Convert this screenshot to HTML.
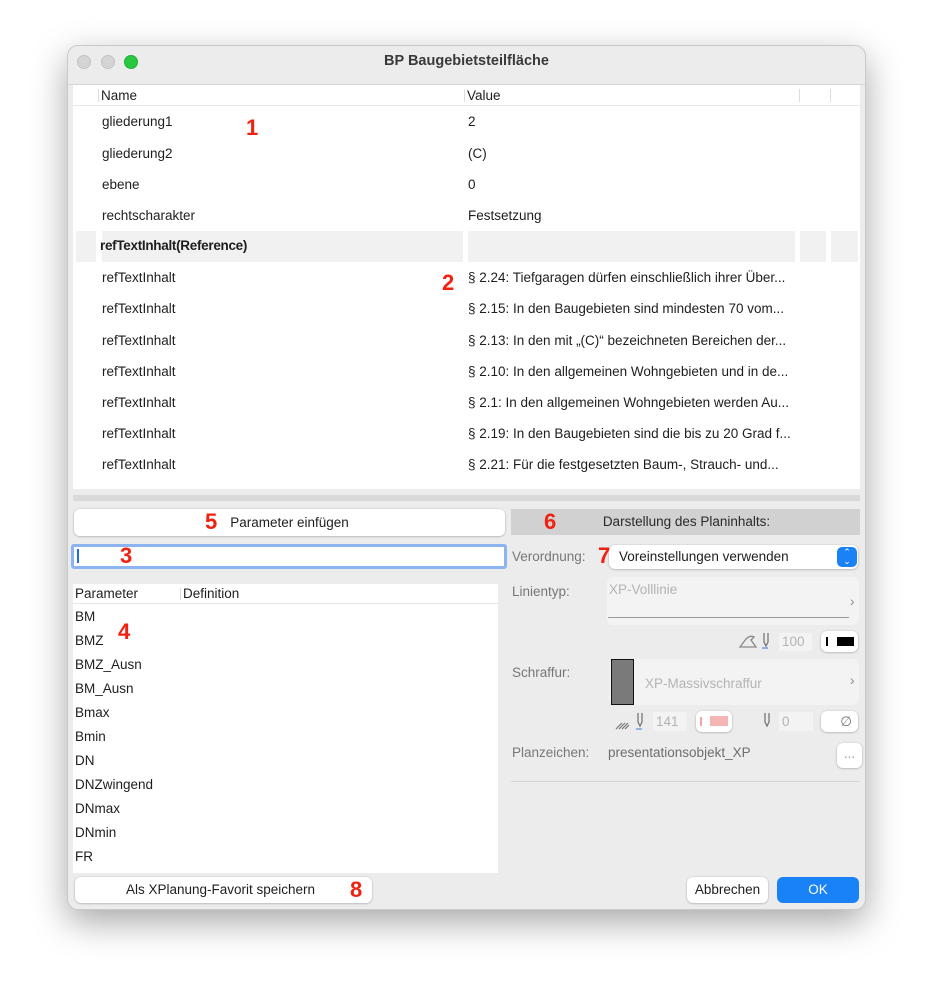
<!DOCTYPE html>
<html><head><meta charset="utf-8"><style>
*{margin:0;padding:0;box-sizing:border-box}
body{width:933px;height:999px;background:#fff;position:relative;font-family:"Liberation Sans",sans-serif;font-size:13.5px;color:#1e1e1e;overflow:hidden}
.a{position:absolute;white-space:nowrap}
.win{position:absolute;left:67px;top:45px;width:799px;height:865px;background:#ececec;border-radius:11px;border:1px solid #c9c9c9;box-shadow:0 12px 35px rgba(0,0,0,.35);overflow:hidden}
.red{color:#f2200e;font-weight:bold;font-size:22px}
.btn{position:absolute;background:#fff;border-radius:6px;box-shadow:0 0.5px 2px rgba(0,0,0,.3);text-align:center}
.g{color:#b4b4b4}
.lbl{color:#777}
</style></head><body>
<div class="win"></div>
<div class="a" style="left:77px;top:55px;width:14px;height:14px;border-radius:50%;background:#d5d5d5;border:1px solid #c3c3c3"></div>
<div class="a" style="left:101px;top:55px;width:14px;height:14px;border-radius:50%;background:#d5d5d5;border:1px solid #c3c3c3"></div>
<div class="a" style="left:124px;top:55px;width:14px;height:14px;border-radius:50%;background:#2ac840;border:1px solid #20b035"></div>
<div class="a" style="left:0;width:933px;text-align:center;top:53px;font-weight:bold;font-size:14.5px;color:#3a3a3a">BP Baugebietsteilfläche</div>
<div class="a" style="left:68px;top:84px;width:797px;height:1px;background:#d6d6d6"></div>
<div class="a" style="left:73px;top:85px;width:787px;height:404px;background:#fff"></div>
<div class="a" style="left:73px;top:105px;width:787px;height:1px;background:#e6e6e6"></div>
<div class="a" style="left:98px;top:89px;width:1px;height:13px;background:#ddd"></div>
<div class="a" style="left:464px;top:89px;width:1px;height:13px;background:#ddd"></div>
<div class="a" style="left:799px;top:89px;width:1px;height:13px;background:#ddd"></div>
<div class="a" style="left:830px;top:89px;width:1px;height:13px;background:#ddd"></div>
<div class="a" style="left:101px;top:88px">Name</div>
<div class="a" style="left:467px;top:88px">Value</div>
<div class="a" style="left:76px;top:231px;width:20px;height:31px;background:#f1f1f1"></div>
<div class="a" style="left:102px;top:231px;width:361px;height:31px;background:#f1f1f1"></div>
<div class="a" style="left:468px;top:231px;width:327px;height:31px;background:#f1f1f1"></div>
<div class="a" style="left:800px;top:231px;width:26px;height:31px;background:#f1f1f1"></div>
<div class="a" style="left:831px;top:231px;width:27px;height:31px;background:#f1f1f1"></div>
<div class="a" style="left:102px;top:114px">gliederung1</div><div class="a" style="left:468px;top:114px">2</div>
<div class="a" style="left:102px;top:146px">gliederung2</div><div class="a" style="left:468px;top:146px">(C)</div>
<div class="a" style="left:102px;top:177px">ebene</div><div class="a" style="left:468px;top:177px">0</div>
<div class="a" style="left:102px;top:208px">rechtscharakter</div><div class="a" style="left:468px;top:208px">Festsetzung</div>
<div class="a" style="left:100px;top:238px;font-weight:bold;letter-spacing:-0.3px">refTextInhalt(Reference)</div>
<div class="a" style="left:102px;top:270px">refTextInhalt</div><div class="a" style="left:468px;top:270px">§ 2.24: Tiefgaragen dürfen einschließlich ihrer Über...</div>
<div class="a" style="left:102px;top:301px">refTextInhalt</div><div class="a" style="left:468px;top:301px">§ 2.15: In den Baugebieten sind mindesten 70 vom...</div>
<div class="a" style="left:102px;top:333px">refTextInhalt</div><div class="a" style="left:468px;top:333px">§ 2.13: In den mit „(C)“ bezeichneten Bereichen der...</div>
<div class="a" style="left:102px;top:364px">refTextInhalt</div><div class="a" style="left:468px;top:364px">§ 2.10: In den allgemeinen Wohngebieten und in de...</div>
<div class="a" style="left:102px;top:395px">refTextInhalt</div><div class="a" style="left:468px;top:395px">§ 2.1: In den allgemeinen Wohngebieten werden Au...</div>
<div class="a" style="left:102px;top:426px">refTextInhalt</div><div class="a" style="left:468px;top:426px">§ 2.19: In den Baugebieten sind die bis zu 20 Grad f...</div>
<div class="a" style="left:102px;top:457px">refTextInhalt</div><div class="a" style="left:468px;top:457px">§ 2.21: Für die festgesetzten Baum-, Strauch- und...</div>
<div class="a red" style="left:246px;top:115px">1</div>
<div class="a red" style="left:442px;top:270px">2</div>
<div class="a" style="left:73px;top:495px;width:787px;height:6px;background:#d9d9d9"></div>
<div class="btn" style="left:74px;top:509px;width:431px;height:27px;line-height:27px">Parameter einfügen</div>
<div class="a red" style="left:205px;top:509px">5</div>
<div class="a" style="left:71px;top:544px;width:436px;height:25px;border:3px solid #8bb4f0;border-radius:3px;background:#fff"></div>
<div class="a" style="left:77px;top:549px;width:2px;height:14px;background:#1f6ee0"></div>
<div class="a red" style="left:120px;top:543px">3</div>
<div class="a" style="left:73px;top:584px;width:425px;height:289px;background:#fff"></div>
<div class="a" style="left:73px;top:603px;width:425px;height:1px;background:#e6e6e6"></div>
<div class="a" style="left:180px;top:588px;width:1px;height:12px;background:#ddd"></div>
<div class="a" style="left:75px;top:586px">Parameter</div>
<div class="a" style="left:183px;top:586px">Definition</div>
<div class="a" style="left:75px;top:609px">BM</div>
<div class="a" style="left:75px;top:633px">BMZ</div>
<div class="a" style="left:75px;top:657px">BMZ_Ausn</div>
<div class="a" style="left:75px;top:681px">BM_Ausn</div>
<div class="a" style="left:75px;top:705px">Bmax</div>
<div class="a" style="left:75px;top:729px">Bmin</div>
<div class="a" style="left:75px;top:753px">DN</div>
<div class="a" style="left:75px;top:777px">DNZwingend</div>
<div class="a" style="left:75px;top:801px">DNmax</div>
<div class="a" style="left:75px;top:825px">DNmin</div>
<div class="a" style="left:75px;top:849px">FR</div>
<div class="a red" style="left:118px;top:619px">4</div>
<div class="btn" style="left:75px;top:877px;width:297px;height:26px;line-height:26px;padding-right:6px">Als XPlanung-Favorit speichern</div>
<div class="a red" style="left:350px;top:877px">8</div>
<div class="a" style="left:511px;top:509px;width:349px;height:26px;background:#d1d1d1;text-align:center;line-height:26px;color:#2a2a2a;padding-left:2px">Darstellung des Planinhalts:</div>
<div class="a red" style="left:544px;top:509px">6</div>
<div class="a lbl" style="left:512px;top:549px">Verordnung:</div>
<div class="a red" style="left:598px;top:543px">7</div>
<div class="btn" style="left:609px;top:545px;width:249px;height:24px;line-height:24px;text-align:left;padding-left:10px">Voreinstellungen verwenden</div>
<div class="a" style="left:837px;top:547px;width:20px;height:20px;border-radius:5px;background:#1a82f7;color:#fff;font-size:9px;line-height:9px;text-align:center;padding-top:1px">⌃<br>⌄</div>
<div class="a lbl" style="left:512px;top:584px">Linientyp:</div>
<div class="a" style="left:607px;top:577px;width:252px;height:48px;background:#f3f3f3;border-radius:6px"></div>
<div class="a g" style="left:609px;top:582px">XP-Volllinie</div>
<div class="a" style="left:608px;top:617px;width:241px;height:1px;background:#999"></div>
<div class="a" style="left:850px;top:594px;color:#888">›</div>
<svg class="a" style="left:738px;top:631px" width="36" height="20" viewBox="0 0 36 20"><path d="M2 16 L8 8 Q12 4 16 6 L13 9 L18 16 Z" fill="none" stroke="#888" stroke-width="1.3"/><path d="M26 2 V11 L28 15 L30 11 V2" fill="none" stroke="#777" stroke-width="1.3"/><path d="M24 17 H30" stroke="#5a8ee0" stroke-width="1.2"/></svg>
<div class="a g" style="left:779px;top:633px;width:33px;height:18px;background:#f3f3f3;line-height:18px;padding-left:3px">100</div>
<div class="btn" style="left:821px;top:631px;width:37px;height:21px"></div>
<div class="a" style="left:826px;top:637px;width:2px;height:9px;background:#000"></div>
<div class="a" style="left:837px;top:637px;width:17px;height:9px;background:#000"></div>
<div class="a lbl" style="left:512px;top:665px">Schraffur:</div>
<div class="a" style="left:609px;top:659px;width:250px;height:46px;background:#f3f3f3;border-radius:6px"></div>
<div class="a" style="left:611px;top:659px;width:23px;height:46px;background:#7a7a7a;border:1px solid #111"></div>
<div class="a g" style="left:645px;top:676px">XP-Massivschraffur</div>
<div class="a" style="left:850px;top:673px;color:#888">›</div>
<svg class="a" style="left:614px;top:711px" width="34" height="22" viewBox="0 0 34 22"><path d="M2 18 L8 12 M5 18 L11 12 M8 18 L14 12 M11 18 L15 14" stroke="#777" stroke-width="1.2"/><path d="M24 2 V11 L26 15 L28 11 V2" fill="none" stroke="#777" stroke-width="1.3"/><path d="M22 18 H28" stroke="#5a8ee0" stroke-width="1.2"/></svg>
<div class="a g" style="left:653px;top:712px;width:34px;height:19px;background:#f3f3f3;line-height:19px;padding-left:3px">141</div>
<div class="btn" style="left:696px;top:711px;width:36px;height:21px"></div>
<div class="a" style="left:700px;top:717px;width:2px;height:9px;background:#f4a6a6"></div>
<div class="a" style="left:710px;top:716px;width:18px;height:10px;background:#f5b5b5"></div>
<svg class="a" style="left:760px;top:711px" width="16" height="20" viewBox="0 0 16 20"><path d="M5 2 V11 L7 15 L9 11 V2" fill="none" stroke="#777" stroke-width="1.3"/></svg>
<div class="a g" style="left:779px;top:712px;width:34px;height:19px;background:#f3f3f3;line-height:19px;padding-left:3px">0</div>
<div class="btn" style="left:821px;top:711px;width:37px;height:21px;line-height:21px;color:#777;text-align:right;padding-right:6px">∅</div>
<div class="a lbl" style="left:512px;top:745px">Planzeichen:</div>
<div class="a" style="left:608px;top:745px;color:#6e6e6e">presentationsobjekt_XP</div>
<div class="btn" style="left:837px;top:743px;width:25px;height:25px;line-height:22px;color:#999">...</div>
<div class="a" style="left:511px;top:781px;width:349px;height:1px;background:#d6d6d6"></div>
<div class="btn" style="left:687px;top:877px;width:81px;height:26px;line-height:26px">Abbrechen</div>
<div class="a" style="left:777px;top:877px;width:82px;height:26px;line-height:26px;background:#1a82f7;border-radius:6px;color:#fff;text-align:center">OK</div>
</body></html>
